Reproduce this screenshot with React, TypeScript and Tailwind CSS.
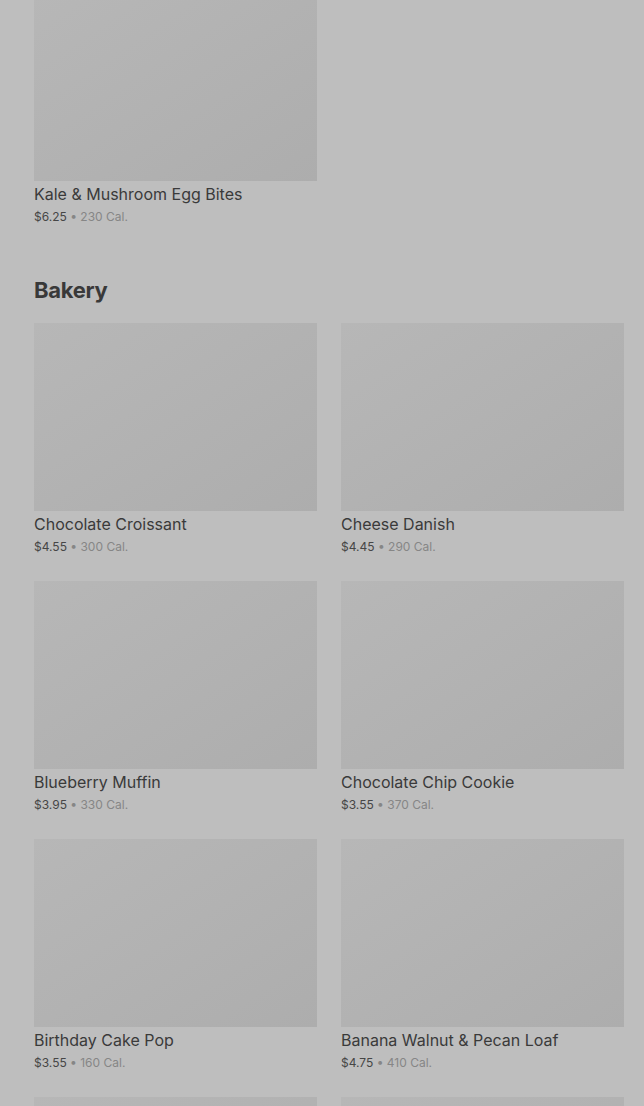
import React from 'react';

interface MenuItem {
  name: string;
  price: string;
  cal: number;
}

const breakfast: MenuItem[] = [{ name: 'Kale & Mushroom Egg Bites', price: '$6.25', cal: 230 }];

const bakery: MenuItem[] = [
  { name: 'Chocolate Croissant', price: '$4.55', cal: 300 },
  { name: 'Cheese Danish', price: '$4.45', cal: 290 },
  { name: 'Blueberry Muffin', price: '$3.95', cal: 330 },
  { name: 'Chocolate Chip Cookie', price: '$3.55', cal: 370 },
  { name: 'Birthday Cake Pop', price: '$3.55', cal: 160 },
  { name: 'Banana Walnut & Pecan Loaf', price: '$4.75', cal: 410 },
];

const ItemCard: React.FC<{ item?: MenuItem }> = ({ item }) => {
  return (
    <div className="flex flex-col">
      <div className="h-[188px] w-full bg-gradient-to-br from-[#b7b7b7] to-[#adadad]" />
      {item && (
        <>
          <p className="mt-[2px] text-[16px] leading-[22px] text-[#3a3a3a]">{item.name}</p>
          <p className="mt-[1px] text-[12px] leading-[22px]">
            <span className="text-[#464646]">{item.price}</span>
            <span className="text-[#868686]"> • {item.cal} Cal.</span>
          </p>
        </>
      )}
    </div>
  );
};

export default function App() {
  return (
    <div
      className="h-[1106px] overflow-hidden bg-[#bebebe] pl-[34px] pr-[20px]"
      style={{ fontFamily: 'Inter, "Noto Sans", sans-serif' }}
    >
      <div className="-mt-[7px] grid grid-cols-2 gap-x-[24px] gap-y-[23px]">
        {breakfast.map((item, i) => (
          <ItemCard key={i} item={item} />
        ))}
      </div>

      <h2 className="mt-[48px] mb-[19px] text-[22px] font-bold leading-[28px] tracking-[-0.3px] text-[#393939]">
        Bakery
      </h2>
      <div className="grid grid-cols-2 gap-x-[24px] gap-y-[23px]">
        {bakery.map((item, i) => (
          <ItemCard key={i} item={item} />
        ))}
        <ItemCard />
        <ItemCard />
      </div>
    </div>
  );
}
